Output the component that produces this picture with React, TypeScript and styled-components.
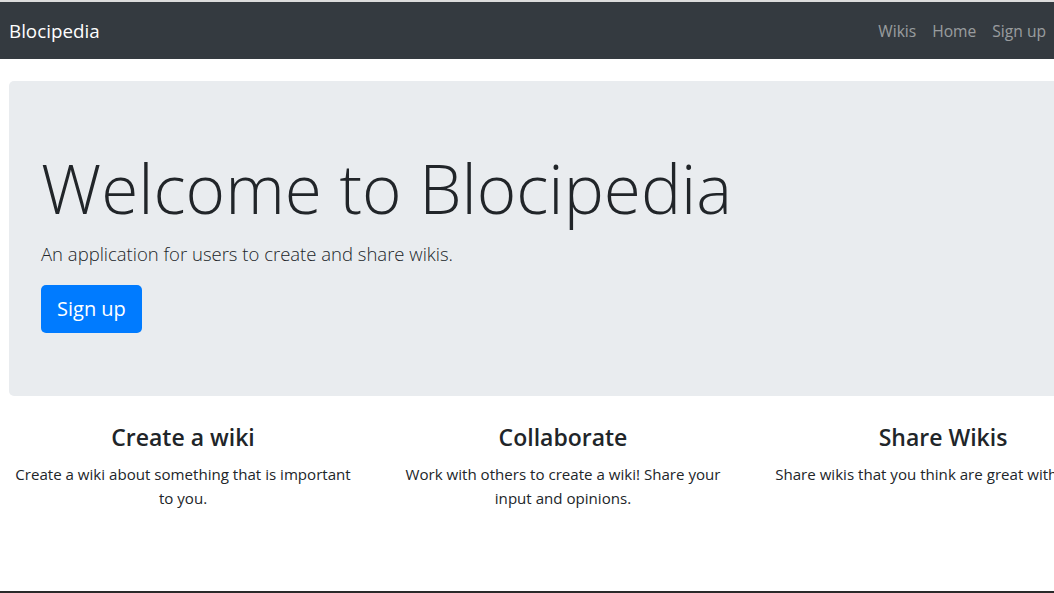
import React from "react";
import styled, { createGlobalStyle } from "styled-components";

const Global = createGlobalStyle`
  html, body { margin: 0; padding: 0; background: #fff; }
  body {
    overflow: hidden;
    font-family: "Open Sans", "Noto Sans", Arial, sans-serif;
    color: #212529;
    -webkit-font-smoothing: antialiased;
  }
  * { box-sizing: border-box; }
`;

const Page = styled.div`
  width: 1054px;
  height: 593px;
  overflow: hidden;
  display: flex;
  flex-direction: column;
  border-top: 2px solid #dcdcdc;
`;

const Navbar = styled.nav`
  flex: none;
  height: 57px;
  background: #343a40;
  display: flex;
  align-items: center;
  justify-content: space-between;
  padding: 0 0 0 9px;
`;

const Brand = styled.a`
  color: #fff;
  font-size: 18.8px;
  line-height: 30px;
  text-decoration: none;
`;

const NavList = styled.ul`
  display: flex;
  list-style: none;
  margin: 0;
  padding: 0;
`;

const NavLink = styled.a`
  display: block;
  padding: 8px;
  font-size: 15.6px;
  line-height: 24px;
  color: rgba(255, 255, 255, 0.5);
  text-decoration: none;
`;

const Main = styled.main`
  flex: 1;
  padding-top: 22px;
  overflow: hidden;
`;

const Jumbotron = styled.section`
  margin-left: 9px;
  width: 1100px;
  background: #e9ecef;
  border-radius: 5px;
  padding: 64px 32px 63px;
  margin-bottom: 24px;
`;

const Display = styled.h1`
  margin: 0 0 8px;
  font-size: 67.5px;
  font-weight: 300;
  line-height: 86px;
  color: #212529;
`;

const Lead = styled.p`
  margin: 0 0 16px;
  font-size: 18.5px;
  font-weight: 300;
  line-height: 30px;
  color: #212529;
`;

const Button = styled.a`
  display: inline-block;
  background: #007bff;
  color: #fff;
  font-size: 20px;
  line-height: 30px;
  padding: 9px 16px;
  border-radius: 5px;
  text-decoration: none;
`;

const Row = styled.div`
  display: grid;
  grid-template-columns: repeat(3, 380px);
  width: 1140px;
  margin-left: -7px;
`;

const Feature = styled.div`
  padding: 0 15px;
  text-align: center;
`;

const FeatureTitle = styled.h3`
  margin: 0 0 8px;
  font-size: 23px;
  font-weight: 600;
  line-height: 34px;
`;

const FeatureText = styled.p<{ $nowrap?: boolean }>`
  margin: 0;
  font-size: 15.1px;
  line-height: 24px;
  white-space: ${(p) => (p.$nowrap ? "nowrap" : "normal")};
`;

const BottomEdge = styled.div`
  flex: none;
  height: 2px;
  background: #2a2a2a;
`;

const features = [
  { title: "Create a wiki", text: "Create a wiki about something that is important to you." },
  { title: "Collaborate", text: "Work with others to create a wiki! Share your input and opinions." },
  { title: "Share Wikis", text: "Share wikis that you think are great with others.", nowrap: true },
];

export default function App() {
  return (
    <>
      <Global />
      <Page>
        <Navbar>
          <Brand href="#">Blocipedia</Brand>
          <NavList>
            <li><NavLink href="#">Wikis</NavLink></li>
            <li><NavLink href="#">Home</NavLink></li>
            <li><NavLink href="#">Sign up</NavLink></li>
          </NavList>
        </Navbar>
        <Main>
          <Jumbotron>
            <Display>Welcome to Blocipedia</Display>
            <Lead>An application for users to create and share wikis.</Lead>
            <Button href="#">Sign up</Button>
          </Jumbotron>
          <Row>
            {features.map((f) => (
              <Feature key={f.title}>
                <FeatureTitle>{f.title}</FeatureTitle>
                <FeatureText $nowrap={f.nowrap}>{f.text}</FeatureText>
              </Feature>
            ))}
          </Row>
        </Main>
        <BottomEdge />
      </Page>
    </>
  );
}
